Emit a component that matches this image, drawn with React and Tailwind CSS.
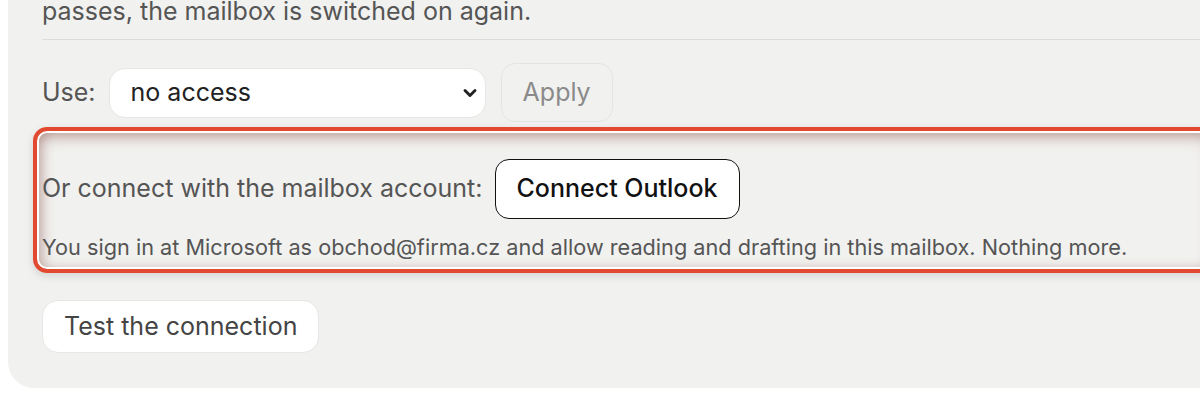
import { ChevronDown } from "lucide-react";

export default function App() {
  return (
    <div className="h-[400px] overflow-hidden bg-white font-['Inter',sans-serif]">
      <div className="ml-2 w-[1240px] rounded-b-[26px] bg-[#f1f1ef] px-[34px] pb-[35px]">
        <p className="-mt-[7px] border-b border-[#dcdcda] pb-[10px] text-[25px] leading-[36px] text-[#555]">
          passes, the mailbox is switched on again.
        </p>

        <div className="mt-[23px] flex items-center">
          <span className="text-[25px] text-[#555]">Use:</span>
          <div className="relative ml-[13px] h-[50px] w-[377px]">
            <select
              defaultValue="none"
              className="h-full w-full appearance-none rounded-[16px] border border-[#e6e6e4] bg-white pl-[21px] text-[25px] text-[#222] outline-none"
            >
              <option value="none">no access</option>
            </select>
            <ChevronDown
              className="pointer-events-none absolute right-[6px] top-1/2 h-[20px] w-[20px] -translate-y-1/2 text-[#222]"
              strokeWidth={3.5}
            />
          </div>
          <button className="ml-[15px] h-[59px] rounded-[14px] border border-[#e4e4e2] bg-[#f1f1ef] px-[21px] text-[25px] text-[#8a8a8a]">
            Apply
          </button>
        </div>

        {/* highlighted sign-in block */}
        <div className="-ml-[9px] mt-[5px] rounded-[14px] border-[4px] border-[#e14a30] pb-[8px] pl-[5px] pt-[28px] shadow-[0_3px_8px_rgba(0,0,0,0.12),inset_0_0_0_2px_#fff,inset_0_6px_14px_rgba(130,70,60,0.4),inset_6px_0_12px_rgba(130,70,60,0.25)]">
          <div className="flex items-center">
            <span className="text-[25px] text-[#555]">Or connect with the mailbox account:</span>
            <button className="ml-[12px] h-[60px] rounded-[14px] border-[1.5px] border-[#111] bg-white px-[21px] text-[25px] font-medium text-[#111]">
              Connect Outlook
            </button>
          </div>
          <p className="mt-[14px] text-[21.7px] leading-[28px] text-[#555]">
            You sign in at Microsoft as obchod@firma.cz and allow reading and drafting in this mailbox. Nothing more.
          </p>
        </div>

        <button className="mt-[27px] h-[53px] rounded-[16px] border border-[#e6e6e4] bg-white px-[21px] text-[25px] text-[#444]">
          Test the connection
        </button>
      </div>
    </div>
  );
}
